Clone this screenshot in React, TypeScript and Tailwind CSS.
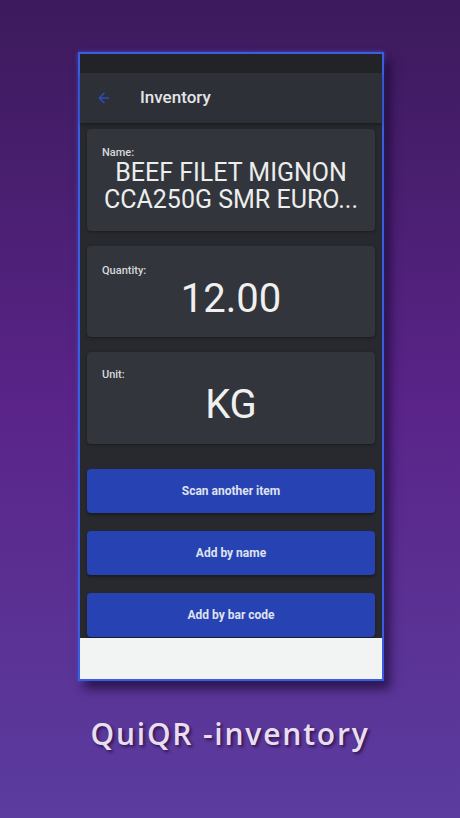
import { ArrowLeft } from "lucide-react";

const fields = [
  { label: "Quantity:", value: "12.00", box: "mt-[15px] pt-[18px] pb-[16px]", valueCls: "" },
  { label: "Unit:", value: "KG", box: "mt-[15px] pt-[16px] pb-[17px]", valueCls: "mt-[2px]" },
];

const buttons = ["Scan another item", "Add by name", "Add by bar code"];

export default function App() {
  return (
    <div
      className="w-[460px] h-[818px] overflow-hidden flex flex-col items-start bg-gradient-to-b from-[#3c1a5c] via-[#5a2489] to-[#5b3c9f]"
      style={{ fontFamily: "Roboto, 'Liberation Sans', sans-serif" }}
    >
      {/* Phone frame */}
      <div className="ml-[78px] mt-[52px] w-[306px] border-2 border-[#3b5de2] bg-[#27292e] shadow-[6px_8px_10px_rgba(18,4,40,0.65),0_0_4px_rgba(70,110,255,0.6)] flex flex-col">
        {/* Status bar */}
        <div className="h-[19px] bg-[#222326]" />

        {/* Toolbar */}
        <div className="h-[50px] bg-[#2d3036] flex items-center shadow-[0_2px_3px_rgba(0,0,0,0.3)]">
          <ArrowLeft size={16} strokeWidth={2.2} className="ml-[16px] text-[#2f4cc0]" />
          <span className="ml-[28px] text-[17px] font-medium text-[#e4e5e7]">Inventory</span>
        </div>

        <div className="px-[7px] flex flex-col">
          {/* Name card */}
          <div className="mt-[6px] rounded-[4px] bg-[#32353b] pt-[17px] pb-[18px] px-[10px] shadow-[0_1px_3px_rgba(0,0,0,0.35)]">
            <p className="ml-[5px] text-[11px] leading-[13px] font-medium text-[#d8d9db]">Name:</p>
            <p className="text-[25px] leading-[27px] text-[#eceded] text-center">
              BEEF FILET MIGNON
              <br />
              CCA250G SMR EURO...
            </p>
          </div>

          {fields.map((f) => (
            <div
              key={f.label}
              className={`${f.box} rounded-[4px] bg-[#32353b] px-[15px] shadow-[0_1px_3px_rgba(0,0,0,0.35)]`}
            >
              <p className="text-[11px] leading-[13px] font-medium text-[#d8d9db]">{f.label}</p>
              <p className={`${f.valueCls} text-[40px] leading-[44px] text-[#f0f0f0] text-center`}>{f.value}</p>
            </div>
          ))}

          {/* Buttons */}
          <div className="mt-[25px] flex flex-col gap-[18px]">
            {buttons.map((b) => (
              <button
                key={b}
                className="h-[44px] rounded-[4px] bg-[#2742b3] text-[12px] font-bold text-[#dfe3ef] shadow-[0_2px_3px_rgba(0,0,0,0.35)]"
              >
                {b}
              </button>
            ))}
          </div>
        </div>

        {/* Footer */}
        <div className="mt-px h-[41px] bg-[#f2f3f3]" />
      </div>

      {/* Caption */}
      <p
        className="mt-[33px] w-full text-center text-[30px] leading-[40px] font-semibold tracking-[1.8px] text-[#e8deef] [text-shadow:2px_2px_3px_rgba(30,10,50,0.7)]"
        style={{ fontFamily: "'Open Sans', 'Liberation Sans', sans-serif" }}
      >
        QuiQR -inventory
      </p>
    </div>
  );
}
